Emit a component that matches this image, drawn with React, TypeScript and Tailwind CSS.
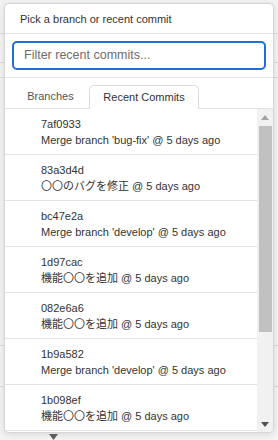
const commits = [
  { hash: '7af0933', message: "Merge branch 'bug-fix'" },
  { hash: '83a3d4d', message: '〇〇のバグを修正' },
  { hash: 'bc47e2a', message: "Merge branch 'develop'" },
  { hash: '1d97cac', message: '機能〇〇を追加' },
  { hash: '082e6a6', message: '機能〇〇を追加' },
  { hash: '1b9a582', message: "Merge branch 'develop'" },
  { hash: '1b098ef', message: '機能〇〇を追加' },
]

const font = {
  fontFamily: '"Liberation Sans", "Noto Sans CJK JP", sans-serif',
}

const App = () => {
  return (
    <div
      className="relative h-[440px] w-[278px] overflow-hidden bg-[#f3f3f3] text-[#333]"
      style={font}
    >
      {/* page behind the popover */}
      <div className="flex flex-col">
        <div className="h-[34px] border-b border-[#dcdcdc]" />
        <div className="h-[29px] border-b border-[#dcdcdc]" />
        <div className="h-[15px] border-b border-[#dcdcdc]" />
        <div className="h-[268px] border-b border-[#dcdcdc]" />
        <div className="h-[41px] border-b border-[#dcdcdc]" />
        <div className="flex h-[50px] pl-[49px] pt-[47px]">
          <svg width="9" height="6" viewBox="0 0 9 6">
            <path d="M0 0 L9 0 L4.5 6 Z" fill="#606060" />
          </svg>
        </div>
      </div>

      <div className="absolute left-[4px] top-[3px] flex h-[430px] w-[270px] flex-col overflow-hidden rounded-[5px] border border-[#d6d6d6] bg-white shadow-[0_1px_6px_rgba(0,0,0,0.12)]">
        <div className="flex h-[30px] shrink-0 items-center border-b border-[#e3e3e3] pl-[15px] pt-px text-[11px]">
          Pick a branch or recent commit
        </div>

        <div className="shrink-0 border-b border-[#e3e3e3] px-[7px] py-[7px]">
          <div className="flex h-[29px] items-center rounded-[5px] border-2 border-[#1f6fd6] pl-[10px] text-[12.5px] text-[#6d6d6d]">
            Filter recent commits...
          </div>
        </div>

        <div className="flex h-[31px] shrink-0 items-end gap-[1px] border-b border-[#e3e3e3] pl-[8px] text-[11px]">
          <div className="flex h-[23px] w-[75px] items-center justify-center text-[#555]">
            Branches
          </div>
          <div className="-mb-px flex h-[24px] w-[110px] items-center justify-center rounded-t-[5px] border border-b-0 border-[#dcdcdc] bg-white">
            Recent Commits
          </div>
        </div>

        <div className="flex min-h-0 flex-1">
          <div className="flex min-w-0 flex-1 flex-col">
            {commits.map((c, i) => (
              <div
                key={i}
                className="h-[46px] shrink-0 border-b border-[#e3e3e3] pl-[36px] pt-[7px] text-[11px] leading-[16px]"
              >
                <div>{c.hash}</div>
                <div className="whitespace-nowrap">{c.message} @ 5 days ago</div>
              </div>
            ))}
          </div>
          <div className="flex w-[16px] shrink-0 flex-col items-center bg-[#f1f1f1]">
            <svg width="8" height="5" viewBox="0 0 8 5" className="mt-[6px]">
              <path d="M0 5 L4 0 L8 5 Z" fill="#a3a3a3" />
            </svg>
            <div className="mt-[6px] h-[206px] w-[13px] bg-[#c1c1c1]" />
            <div className="flex-1" />
            <svg width="8" height="5" viewBox="0 0 8 5" className="mb-[5px]">
              <path d="M0 0 L8 0 L4 5 Z" fill="#505050" />
            </svg>
          </div>
        </div>
      </div>
    </div>
  )
}

export default App
